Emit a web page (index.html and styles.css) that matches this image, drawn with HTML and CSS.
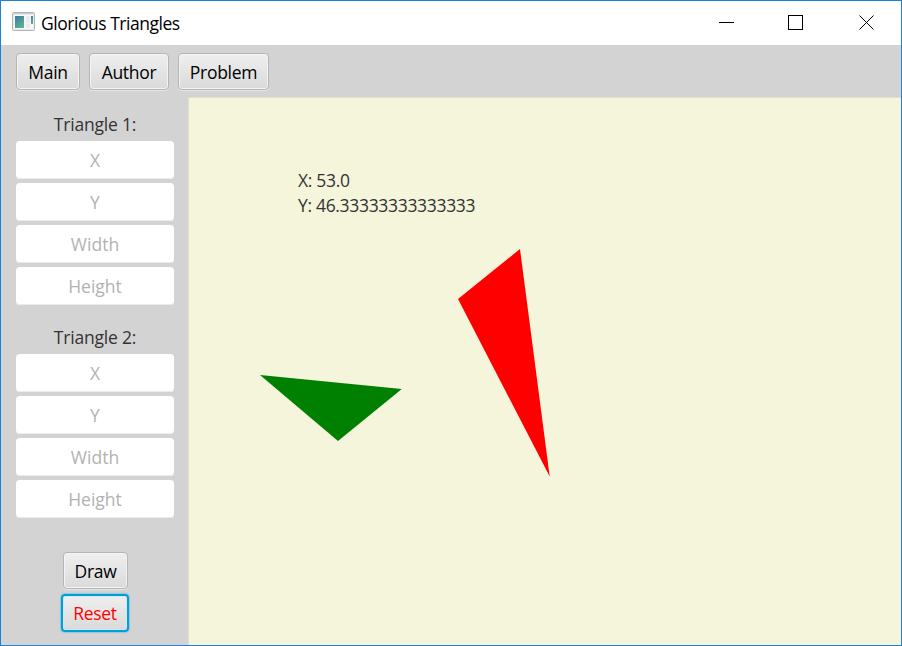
FILE: index.html
```html
<!DOCTYPE html>
<html lang="en">
<head>
<meta charset="utf-8">
<title>Glorious Triangles</title>
<link rel="stylesheet" href="styles.css">
</head>
<body>
<div class="window">
  <header class="titlebar">
    <svg class="app-icon" width="23" height="19" viewBox="0 0 23 19">
      <defs>
        <linearGradient id="pane" x1="0" y1="0" x2="0.6" y2="1"><stop offset="0" stop-color="#3d76a8"/><stop offset="1" stop-color="#5cb28b"/></linearGradient>
      </defs>
      <rect x="0.5" y="0.5" width="22" height="18" rx="1" fill="#e9eaeb" stroke="#b0b5ba"/>
      <path d="M1 1.5h21" stroke="#c9ced2"/>
      <rect x="2" y="3" width="19" height="14" fill="#f7f7f7"/>
      <rect x="3" y="4" width="9" height="12" fill="url(#pane)"/>
      <rect x="14" y="4" width="4" height="7" fill="#ececec"/>
      <rect x="14" y="12" width="4" height="4" fill="#ececec"/>
      <rect x="19" y="4" width="2" height="8" fill="url(#pane)"/>
    </svg>
    <h1 class="title">Glorious Triangles</h1>
    <svg class="controls" width="156" height="15" viewBox="0 0 156 15" fill="none" stroke="#000" shape-rendering="crispEdges">
      <path d="M0 7.5h15"/>
      <rect x="69.500" y="0.500" width="14" height="14"/>
      <path d="M140.500 0.500l14 14M154.500 0.500l-14 14" shape-rendering="auto"/>
    </svg>
  </header>
  <nav class="toolbar">
    <button class="btn main">Main</button>
    <button class="btn author">Author</button>
    <button class="btn problem">Problem</button>
  </nav>
  <main class="content">
    <aside class="sidebar">
      <section class="group">
        <h2 class="label">Triangle 1:</h2>
        <input class="field" placeholder="X">
        <input class="field" placeholder="Y">
        <input class="field" placeholder="Width">
        <input class="field" placeholder="Height">
      </section>
      <section class="group">
        <h2 class="label">Triangle 2:</h2>
        <input class="field" placeholder="X">
        <input class="field" placeholder="Y">
        <input class="field" placeholder="Width">
        <input class="field" placeholder="Height">
      </section>
      <div class="actions">
        <button class="btn draw">Draw</button>
        <button class="btn reset">Reset</button>
      </div>
    </aside>
    <section class="canvas">
      <div class="coords">
        <div>X: 53.0</div>
        <div>Y: 46.33333333333333</div>
      </div>
      <svg class="shapes" width="290" height="228" viewBox="0 0 290 228">
        <path d="M0 126L141.800 140L78 192Z" fill="green"/>
        <path d="M260 0L198 50L289.700 227.500Z" fill="red"/>
      </svg>
    </section>
  </main>
</div>
</body>
</html>
```
FILE: styles.css
```css
* { box-sizing: border-box; }
body {
  margin: 0;
  font: 17.500px/24px "Open Sans", "Noto Sans", sans-serif;
  letter-spacing: -0.300px;
  color: #333;
}
.window {
  width: 902px;
  height: 646px;
  border: 1px solid #1883d7;
  background: #d3d3d3;
  display: flex;
  flex-direction: column;
  overflow: hidden;
}
.titlebar {
  height: 44px;
  flex: none;
  display: flex;
  align-items: center;
  padding: 0 26px 0 11px;
  background: #fff;
}
.app-icon { margin: 0 6px 3px 0; }
.title {
  margin: 0;
  font-size: 17.500px;
  font-weight: 400;
  letter-spacing: -0.470px;
  color: #000;
}
.controls { margin: 0 0 1px auto; }
.toolbar {
  height: 52px;
  flex: none;
  display: flex;
  gap: 9px;
  padding: 8px 15px;
}
.btn {
  height: 37px;
  padding: 0;
  border: 1px solid #b5b5b5;
  border-radius: 4px;
  background: linear-gradient(#efefef, #dadada);
  box-shadow: inset 0 0 0 1px #f4f4f4, 0 1px 0 #e6e6e6;
  font: inherit;
  letter-spacing: inherit;
  color: #000;
  white-space: nowrap;
}
.main { width: 64px; }
.author { width: 80px; }
.problem { width: 91px; }
.content { flex: 1; display: flex; min-height: 0; }
.sidebar { width: 187px; padding: 15px 14px 0 15px; }
.group {
  display: flex;
  flex-direction: column;
  gap: 4px;
  margin-bottom: 20px;
}
.label {
  margin: 0;
  height: 25px;
  font-size: 17.500px;
  line-height: 25px;
  font-weight: 400;
  letter-spacing: -0.200px;
  text-align: center;
  color: #333;
}
.field {
  width: 158px;
  height: 38px;
  padding: 0;
  border: 0;
  border-radius: 4px;
  background: #fff;
  box-shadow: inset 0 -1px 0 #ebebeb;
  font: inherit;
  letter-spacing: 0;
  text-align: center;
}
.field::placeholder { color: #b2b2b2; opacity: 1; }
.actions {
  display: flex;
  flex-direction: column;
  align-items: center;
  gap: 5px;
  padding-top: 14px;
}
.draw { width: 65px; margin-left: 1px; }
.reset {
  width: 68px;
  height: 38px;
  border: 2px solid #039ed3;
  box-shadow: inset 0 0 0 1px #cfe8f1, 0 0 1px 1px #8bc9df;
  color: red;
}
.canvas {
  flex: 1;
  border: solid #e0e0cc;
  border-width: 1px 0 0 1px;
  background: #f5f5dc;
  padding: 70px 0 0 71px;
}
.coords {
  height: 51px;
  padding-left: 38px;
  line-height: 25px;
  letter-spacing: -0.320px;
}
.shapes { display: block; margin-top: 30px; }
```
